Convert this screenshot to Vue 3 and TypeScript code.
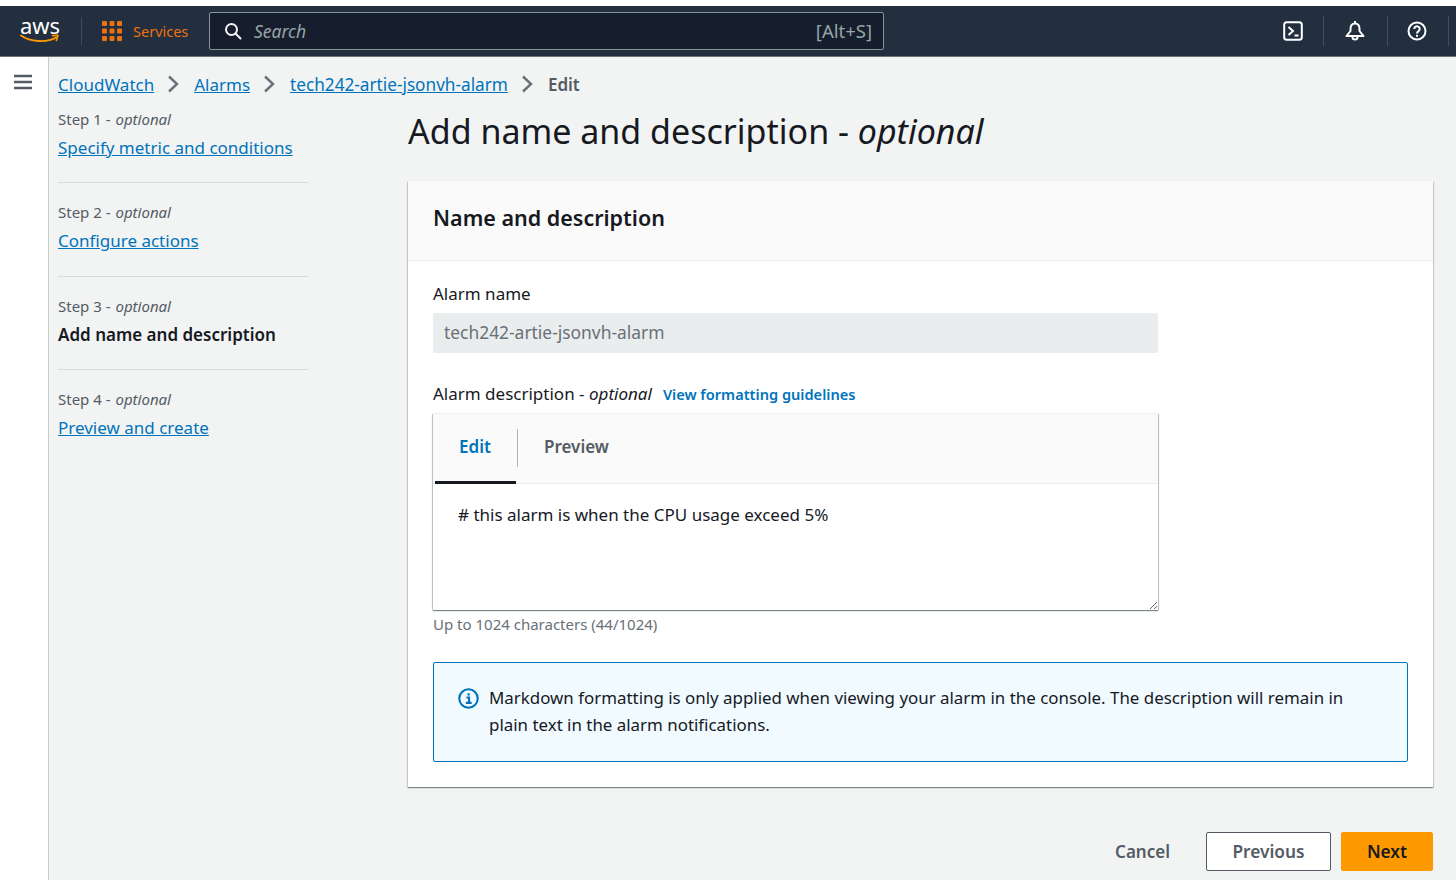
<script setup lang="ts">
const steps = [
  { n: 1, label: 'Specify metric and conditions', current: false },
  { n: 2, label: 'Configure actions', current: false },
  { n: 3, label: 'Add name and description', current: true },
  { n: 4, label: 'Preview and create', current: false }
]
const crumbs = ['CloudWatch', 'Alarms', 'tech242-artie-jsonvh-alarm']
</script>

<template>
  <div class="page">
    <header class="topbar">
      <div class="logo">
        <span class="logo-text">aws</span>
        <svg class="smile" viewBox="0 0 40 10" width="40" height="10">
          <path d="M1 1.500C10 8 27 9 36 3.500" fill="none" stroke="#f90" stroke-width="1.800" stroke-linecap="round" />
          <path d="M32.500 1.600L38 1.200L36.400 6.400" fill="none" stroke="#f90" stroke-width="1.600" stroke-linecap="round" stroke-linejoin="round" />
        </svg>
      </div>
      <span class="bar-sep"></span>
      <svg class="grid-icon" viewBox="0 0 20 20" width="20" height="20">
        <g fill="#ec7211">
          <rect v-for="i in 9" :key="i" :x="(i - 1) % 3 * 7.5" :y="Math.floor((i - 1) / 3) * 7.5" width="5" height="5" rx="1" />
        </g>
      </svg>
      <span class="services">Services</span>
      <div class="search">
        <svg viewBox="0 0 18 18" width="18" height="18">
          <circle cx="7.500" cy="7.500" r="5.500" fill="none" stroke="#f2f3f3" stroke-width="2" />
          <path d="M11.500 11.500L16.500 16.500" stroke="#f2f3f3" stroke-width="2" stroke-linecap="round" />
        </svg>
        <span class="search-ph">Search</span>
        <span class="search-key">[Alt+S]</span>
      </div>
      <div class="top-icons">
        <span class="icon-cell">
          <svg viewBox="0 0 20 20" width="20" height="20">
            <rect x="1.200" y="1.200" width="17.600" height="17.600" rx="2.500" fill="none" stroke="#fff" stroke-width="2" />
            <path d="M5.500 6l4.500 4-4.500 4M11.500 14.500h4" fill="none" stroke="#fff" stroke-width="2" />
          </svg>
        </span>
        <span class="icon-cell">
          <svg viewBox="0 0 20 20" width="20" height="20">
            <path d="M10 2.500C7 2.500 5.500 5 5.500 8v2L1.500 15h17l-4-5V8C14.500 5 13 2.500 10 2.500z" fill="none" stroke="#fff" stroke-width="2" stroke-linejoin="round" />
            <path d="M10 0v3" stroke="#fff" stroke-width="2" />
            <path d="M7.500 16a2.500 2.500 0 0 0 5 0" fill="none" stroke="#fff" stroke-width="2" />
          </svg>
        </span>
        <span class="icon-cell">
          <svg viewBox="0 0 20 20" width="20" height="20">
            <circle cx="10" cy="10" r="8.500" fill="none" stroke="#fff" stroke-width="2" />
            <path d="M7.300 8a2.700 2.700 0 1 1 4.200 2.200c-1 .7-1.500 1.100-1.500 2.300" fill="none" stroke="#fff" stroke-width="2" />
            <rect x="9" y="13.800" width="2" height="2" fill="#fff" />
          </svg>
        </span>
      </div>
    </header>

    <div class="body">
      <aside class="rail">
        <svg viewBox="0 0 18 16" width="18" height="16">
          <path d="M0 2h18M0 8h18M0 14h18" stroke="#545b64" stroke-width="2.400" />
        </svg>
      </aside>

      <div class="content">
        <nav class="crumbs">
          <template v-for="c in crumbs" :key="c">
            <a class="link">{{ c }}</a>
            <svg viewBox="0 0 12 18" width="12" height="18">
              <path d="M2 1.500L10 9L2 16.500" fill="none" stroke="#687078" stroke-width="2.400" />
            </svg>
          </template>
          <span class="crumb-cur">Edit</span>
        </nav>

        <div class="columns">
          <ul class="steps">
            <li v-for="s in steps" :key="s.n" class="step">
              <div class="step-num">Step {{ s.n }} - <i>optional</i></div>
              <div v-if="s.current" class="step-cur">{{ s.label }}</div>
              <a v-else class="link step-link">{{ s.label }}</a>
            </li>
          </ul>

          <main class="form">
            <h1>Add name and description - <i>optional</i></h1>
            <section class="card">
              <div class="card-head">Name and description</div>
              <div class="card-body">
                <div class="label">Alarm name</div>
                <div class="input">tech242-artie-jsonvh-alarm</div>

                <div class="label desc-label">
                  Alarm description - <i>optional</i>
                  <a class="guide">View formatting guidelines</a>
                </div>
                <div class="editor">
                  <div class="tabs">
                    <span class="tab active">Edit</span>
                    <span class="tab-line"></span>
                    <span class="tab">Preview</span>
                  </div>
                  <div class="text-area"># this alarm is when the CPU usage exceed 5%</div>
                </div>
                <div class="hint">Up to 1024 characters (44/1024)</div>

                <div class="alert">
                  <svg viewBox="0 0 20 20" width="21" height="21">
                    <circle cx="10" cy="10" r="8.800" fill="none" stroke="#0073bb" stroke-width="2" />
                    <path d="M8 9h2.500v5M7.500 14.200h5.500" fill="none" stroke="#0073bb" stroke-width="2" />
                    <rect x="9" y="5" width="2.200" height="2.200" fill="#0073bb" />
                  </svg>
                  <p>Markdown formatting is only applied when viewing your alarm in the console. The description will remain in plain text in the alarm notifications.</p>
                </div>
              </div>
            </section>

            <div class="actions">
              <span class="cancel">Cancel</span>
              <button class="btn">Previous</button>
              <button class="btn primary">Next</button>
            </div>
          </main>
        </div>
      </div>
    </div>
  </div>
</template>

<style>
html,
body {
  margin: 0;
  background: #fff;
}
</style>

<style scoped>
.page {
  height: 880px;
  overflow: hidden;
  padding-top: 6px;
  box-sizing: border-box;
  font-family: "Noto Sans", "Liberation Sans", sans-serif;
  font-size: 17px;
  color: #16191f;
  display: flex;
  flex-direction: column;
}

.topbar {
  height: 51px;
  flex-shrink: 0;
  box-sizing: border-box;
  background: #232f3e;
  border-bottom: 1px solid #687078;
  display: flex;
  align-items: center;
  padding-left: 20px;
}

.logo {
  width: 40px;
  display: flex;
  flex-direction: column;
  align-items: center;
  color: #fff;
}

.logo-text {
  font-size: 22px;
  line-height: 20px;
  margin-top: -4px;
}

.smile {
  margin-top: -1px;
}

.bar-sep {
  width: 1px;
  height: 28px;
  background: #414d5c;
  margin: 0 20px 0 21px;
}

.services {
  color: #ec7211;
  font-size: 14.5px;
  margin-left: 11px;
  width: 55px;
}

.search {
  margin-left: 21px;
  width: 675px;
  height: 38px;
  box-sizing: border-box;
  background: #161e2d;
  border: 1px solid #879596;
  border-radius: 2px;
  display: flex;
  align-items: center;
  padding: 0 11px 0 14px;
}

.search-ph {
  font-style: italic;
  color: #95a5a6;
  font-size: 17.5px;
  margin-left: 12px;
}

.search-key {
  margin-left: auto;
  margin-top: -1px;
  color: #95a5a6;
  font-size: 18.500px;
}

.top-icons {
  margin-left: 378px;
  display: flex;
  align-items: center;
}

.icon-cell {
  width: 62px;
  height: 30px;
  display: flex;
  align-items: center;
  justify-content: center;
  border-right: 1px solid #414d5c;
  box-sizing: border-box;
}

.icon-cell:nth-child(2) {
  width: 64px;
  padding-right: 2px;
}

.icon-cell:nth-child(3) {
  width: 61px;
  padding-right: 2px;
}

.body {
  flex: 1;
  display: flex;
  min-height: 0;
  background: #f2f3f3;
}

.rail {
  width: 49px;
  box-sizing: border-box;
  flex-shrink: 0;
  background: #fff;
  border-right: 1px solid #c4cccc;
  padding: 17px 0 0 14px;
}

.rail svg {
  display: block;
}

.content {
  flex: 1;
  padding: 15px 23px 0 9px;
  min-width: 0;
}

.crumbs {
  display: flex;
  align-items: center;
  gap: 13px;
  height: 24px;
}

.crumbs svg {
  margin-right: 2px;
}

.crumbs a:nth-of-type(3) {
  font-size: 17.2px;
}

.link {
  color: #0073bb;
  text-decoration: underline;
}

.crumb-cur {
  color: #545b64;
  font-weight: 600;
}

.columns {
  display: grid;
  grid-template-columns: 250px 1fr;
  column-gap: 100px;
  margin-top: 13px;
}

.steps {
  list-style: none;
  margin: 0;
  padding: 0;
}

.step {
  height: 93.500px;
  box-sizing: border-box;
}

.step + .step {
  border-top: 1px solid #d5dbdb;
  padding-top: 18px;
}

.step:first-child {
  height: 74px;
  margin-top: -1px;
}

.step-num {
  font-size: 15px;
  color: #545b64;
  line-height: 22px;
  margin-bottom: 6px;
}

.step-num i {
  margin-left: 1px;
}

.step-cur {
  font-weight: 600;
}

.form h1 {
  margin: 0;
  font-size: 34px;
  font-weight: 400;
  line-height: 44px;
  color: #16191f;
}

.card {
  margin-top: 28px;
  height: 606px;
  background: #fff;
  box-shadow: 0 1px 1px 0 rgba(0, 28, 36, 0.3), 1px 1px 1px 0 rgba(0, 28, 36, 0.15), -1px 1px 1px 0 rgba(0, 28, 36, 0.15);
}

.card-head {
  height: 80px;
  box-sizing: border-box;
  background: #fafafa;
  border-bottom: 1px solid #eaeded;
  padding: 0 25px 7px;
  display: flex;
  align-items: center;
  font-size: 21.5px;
  font-weight: 600;
}

.card-body {
  padding: 20px 25px 0;
}

.label {
  line-height: 26px;
}

.input {
  margin-top: 6px;
  width: 725px;
  height: 40px;
  box-sizing: border-box;
  background: #eaeded;
  border-radius: 2px;
  color: #687078;
  padding: 0 11px;
  line-height: 38px;
  font-size: 17.4px;
}

.desc-label {
  margin-top: 28px;
}

.guide {
  color: #0073bb;
  font-size: 14.6px;
  font-weight: 600;
  margin-left: 11px;
}

.editor {
  margin-top: 7px;
  width: 725px;
  height: 196px;
  background: #fff;
  box-sizing: border-box;
  box-shadow: 0 1px 1px 0 rgba(0, 28, 36, 0.5), 1px 0 1px 0 rgba(0, 28, 36, 0.2), -1px 0 1px 0 rgba(0, 28, 36, 0.2);
  display: flex;
  flex-direction: column;
}

.tabs {
  height: 70px;
  flex-shrink: 0;
  box-sizing: border-box;
  background: #fafafa;
  border-bottom: 1px solid #eaeded;
  display: flex;
  align-items: center;
  padding-left: 2px;
}

.tab {
  font-weight: 600;
  color: #545b64;
  padding: 0 26px 4px;
}

.tab.active {
  color: #0073bb;
  align-self: stretch;
  display: flex;
  align-items: center;
  border-bottom: 3px solid #16191f;
  width: 81px;
  box-sizing: border-box;
  margin-bottom: -1px;
  padding: 0 0 2px 24px;
}

.tab-line {
  width: 1px;
  height: 38px;
  background: #aab7b8;
  margin: 0 0 2px 1px;
}

.text-area {
  flex: 1;
  min-height: 0;
  padding: 19px 25px;
  overflow: auto;
  resize: both;
}

.hint {
  margin-top: 4px;
  font-size: 15px;
  line-height: 20px;
  color: #687078;
}

.alert {
  margin-top: 28px;
  height: 100px;
  box-sizing: border-box;
  background: #f1faff;
  border: 1px solid #0073bb;
  border-radius: 2px;
  display: flex;
  gap: 10px;
  padding: 21px 24px;
}

.alert svg {
  flex-shrink: 0;
  margin-top: 4px;
}

.alert p {
  margin: 0;
  line-height: 27px;
  font-size: 16.9px;
}

.actions {
  margin-top: 45px;
  display: flex;
  align-items: center;
  justify-content: flex-end;
}

.cancel {
  color: #545b64;
  font-weight: 600;
  margin-right: 36px;
}

.btn {
  font: inherit;
  font-weight: 600;
  font-size: 17.3px;
  height: 39px;
  width: 125px;
  padding: 0;
  background: #fff;
  border: 1px solid #545b64;
  border-radius: 2px;
  color: #545b64;
}

.btn.primary {
  margin-left: 10px;
  width: 92px;
  background: #ff9900;
  border-color: #ff9900;
  color: #16191f;
}
</style>
